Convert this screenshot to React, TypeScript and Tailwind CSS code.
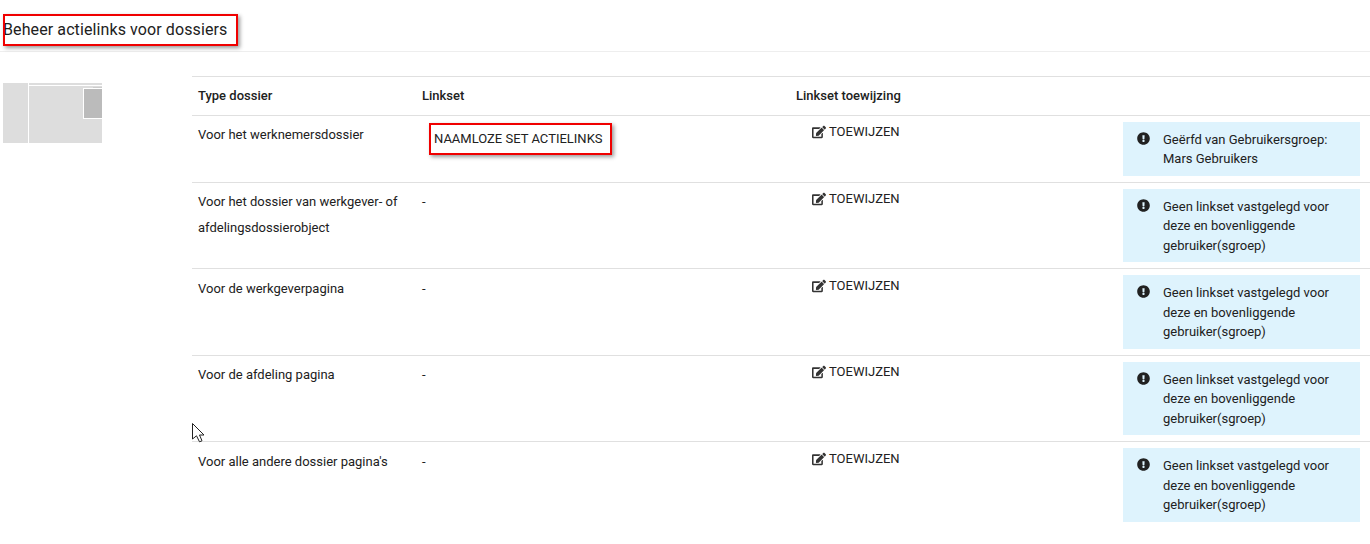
import React from "react";

function EditIcon() {
  return (
    <svg width="14" height="14" viewBox="0 0 576 512" className="fill-[#333] shrink-0">
      <path d="M402.6 83.2l90.2 90.2c3.8 3.8 3.8 10 0 13.8L274.4 405.6l-92.8 10.3c-12.4 1.4-22.9-9.1-21.5-21.5l10.3-92.8L388.8 83.2c3.8-3.8 10-3.8 13.8 0zm162-22.9l-48.8-48.8c-15.2-15.2-39.9-15.2-55.2 0l-35.4 35.4c-3.8 3.8-3.8 10 0 13.8l90.2 90.2c3.8 3.8 10 3.8 13.8 0l35.4-35.4c15.2-15.3 15.2-40 0-55.2zM384 346.2V448H64V128h229.8c3.2 0 6.2-1.3 8.5-3.5l40-40c7.6-7.6 2.2-20.5-8.5-20.5H48C21.5 64 0 85.5 0 112v352c0 26.5 21.5 48 48 48h352c26.5 0 48-21.5 48-48V306.2c0-10.7-12.9-16-20.500-8.500l-40 40c-2.200 2.300-3.500 5.300-3.500 8.500z" />
    </svg>
  );
}

function AlertIcon() {
  return (
    <svg width="13" height="13" viewBox="0 0 512 512" className="fill-[#212121] shrink-0 mt-[2px]">
      <path d="M504 256c0 137-111 248-248 248S8 393 8 256 119 8 256 8s248 111 248 248zm-248 50c-25.400 0-46 20.600-46 46s20.600 46 46 46 46-20.600 46-46-20.600-46-46-46zm-43.700-165.400l7.400 136c.3 6.400 5.600 11.400 12 11.400h48.500c6.400 0 11.700-5 12-11.400l7.400-136c.3-6.900-5.100-12.600-12-12.600h-63.800c-6.900 0-12.300 5.700-12 12.600z" />
    </svg>
  );
}

const GEEN = "Geen linkset vastgelegd voor deze en bovenliggende gebruiker(sgroep)";

const rows = [
  { type: ["Voor het werknemersdossier"], set: "", alert: ["Geërfd van Gebruikersgroep:", "Mars Gebruikers"], h: "h-[67px]", pad: "pt-[6px]", padIcon: "pt-[9px]", box: "pt-[7.5px] pb-[7.500px]" },
  { type: ["Voor het dossier van werkgever- of", "afdelingsdossierobject"], set: "-", alert: null, h: "h-[86px]", pad: "pt-[6px]", padIcon: "pt-[9px]", box: "pt-[7.5px] pb-[6.500px]" },
  { type: ["Voor de werkgeverpagina"], set: "-", alert: null, h: "h-[87px]", pad: "pt-[7px]", padIcon: "pt-[10px]", box: "pt-[8px] pb-[7px]" },
  { type: ["Voor de afdeling pagina"], set: "-", alert: null, h: "h-[86px]", pad: "pt-[6px]", padIcon: "pt-[9px]", box: "pt-[7.5px] pb-[6.500px]" },
  { type: ["Voor alle andere dossier pagina's"], set: "-", alert: null, h: "h-[88px]", pad: "pt-[7px]", padIcon: "pt-[10px]", box: "pt-[8px] pb-[7px]" },
];

export default function App() {
  return (
    <div className="w-[1370px] h-[544px] overflow-hidden bg-white text-[#212121] font-['Roboto',sans-serif] text-[13px]">
      <div className="h-[52px] border-b border-[#eeeeee] pt-[14px] pl-[3px]">
        <div className="w-[235px] h-[32px] border-2 border-[#f00000] shadow-[2px_2px_4px_rgba(0,0,0,0.4)] text-[16px] tracking-[0.1px] leading-[28px] whitespace-nowrap overflow-hidden">
          <span className="ml-[-2px]">Beheer actielinks voor dossiers</span>
        </div>
      </div>

      <div className="flex pt-[24px]">
        <div className="w-[192px] shrink-0 pl-[3px] pt-[7px]">
          <div className="relative w-[99px] h-[60px] bg-[#dddddd]">
            <div className="absolute left-[25px] top-0 bottom-0 w-[1px] bg-white" />
            <div className="absolute left-[25px] top-[2px] right-0 h-[1px] bg-white" />
            <div className="absolute left-[80px] top-[5px] right-0 h-[31px] bg-[#bbbbbb] border border-white border-r-0" />
            <div className="absolute left-[90px] top-[4px] right-0 h-[1px] bg-[#cccccc]" />
          </div>
        </div>

        <div className="flex-1 min-w-0">
          <div className="flex h-[40px] items-center border-t border-b border-[#e0e0e0] font-medium text-[#212121]">
            <div className="w-[224px] pl-[6px] shrink-0">Type dossier</div>
            <div className="w-[374px] pl-[6px] shrink-0">Linkset</div>
            <div className="w-[110px] pl-[6px] shrink-0 whitespace-nowrap">Linkset toewijzing</div>
          </div>

          {rows.map((r, i) => (
            <div key={i} className={`flex ${r.h} border-b border-[#e0e0e0] last:border-b-0`}>
              <div className={`w-[224px] pl-[6px] ${r.pad} shrink-0 leading-[26px]`}>
                {r.type.map((t) => (
                  <div key={t} className="whitespace-nowrap">{t}</div>
                ))}
              </div>
              <div className={`w-[374px] pl-[6px] ${r.pad} shrink-0 leading-[26px]`}>
                {r.set === "" ? (
                  <div className="ml-[7px] mt-[1px] w-[183px] h-[32px] border-2 border-[#f00000] shadow-[2px_2px_4px_rgba(0,0,0,0.4)] pl-[3px] leading-[27px] whitespace-nowrap">
                    NAAMLOZE SET ACTIELINKS
                  </div>
                ) : (
                  r.set
                )}
              </div>
              <div className={`w-[333px] shrink-0 pl-[22px] ${r.padIcon}`}>
                <div className="flex items-center gap-[3px] leading-[14px] whitespace-nowrap">
                  <EditIcon />
                  <span>TOEWIJZEN</span>
                </div>
              </div>
              <div className={`w-[237px] mt-[6px] shrink-0 self-start bg-[#def3fd] pl-[14px] ${r.box} flex gap-[13px] leading-[19.500px]`}>
                <AlertIcon />
                <div>
                  {r.alert ? r.alert.map((t) => <div key={t} className="whitespace-nowrap">{t}</div>) : <div className="w-[185px]">{GEEN}</div>}
                </div>
              </div>
            </div>
          ))}
        </div>
      </div>

      <svg width="14" height="20" viewBox="0 0 14 20" className="absolute left-[192px] top-[423px]">
        <path d="M0.500 0.500 L0.500 16 L4.500 12.800 L7.500 18.800 L10 17.800 L7.500 12 L12 12 Z" fill="#fff" stroke="#222" strokeWidth="1" />
      </svg>
    </div>
  );
}
